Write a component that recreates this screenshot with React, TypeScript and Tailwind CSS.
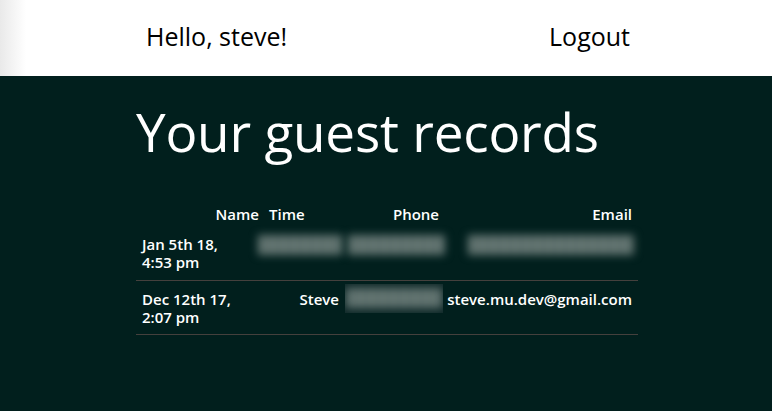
import React from "react";

const Blur = ({ w, className = "", clip = false }: { w: string; className?: string; clip?: boolean }) => {
  const inner = (
    <div
      className={
        "h-[20px] blur-[4px] bg-[repeating-linear-gradient(90deg,#5b6d6b_0px,#71837f_5px,#4e605e_8px,#63756f_11px)] " +
        w
      }
    />
  );
  return clip ? (
    <div className={"overflow-hidden h-[29px] flex items-center justify-center bg-[#24363a]/40 " + className}>{inner}</div>
  ) : (
    <div className={className}>{inner}</div>
  );
};

export default function App() {
  return (
    <div
      className="min-h-[411px] bg-[#011f1d]"
      style={{ fontFamily: '"Open Sans", "Noto Sans", sans-serif' }}
    >
      <header className="h-[76px] bg-[linear-gradient(to_right,#e9e9e9,#ffffff_26px)]">
        <div className="w-[500px] mx-auto h-full flex items-center justify-between pl-[10px] pr-[6px] text-[25px] text-black pb-[3px]">
          <span>Hello, steve!</span>
          <span>Logout</span>
        </div>
      </header>
      <main className="w-[500px] mx-auto">
        <h1 className="text-[53px] leading-[1.2] text-white pt-[24px] tracking-[-0.2px]">Your guest records</h1>
        <table className="mt-[41px] w-[502px] table-fixed border-collapse text-white text-[15px] font-semibold leading-[18px]">
          <thead>
            <tr>
              <th className="w-[129px] text-right px-[6px] pb-[6px] font-semibold">Name</th>
              <th className="w-[80px] text-left px-[4px] pb-[6px] font-semibold">Time</th>
              <th className="w-[101px] text-right px-[7px] pb-[6px] font-semibold">Phone</th>
              <th className="w-[192px] text-right px-[6px] pb-[6px] font-semibold">Email</th>
            </tr>
          </thead>
          <tbody>
            <tr className="border-b border-[#45403d]">
              <td className="align-top px-[6px] pt-[6px] pb-[9px]">Jan 5th 18,<br />4:53 pm</td>
              <td className="align-top pt-[6px]"><Blur w="w-[84px]" className="-ml-[7px]" /></td>
              <td className="align-top pt-[6px] pl-[3px]"><Blur w="w-[97px]" /></td>
              <td className="align-top pt-[6px] pl-[22px] pr-[3px]"><Blur w="w-[166px]" /></td>
            </tr>
            <tr className="border-b border-[#45403d]">
              <td className="align-top px-[6px] pt-[9px] pb-[8px]">Dec 12th 17,<br />2:07 pm</td>
              <td className="align-top px-[6px] pt-[9px] text-right">Steve</td>
              <td className="align-top pt-[3px] pr-[3px]"><Blur w="w-[96px]" clip /></td>
              <td className="align-top pl-0 pr-[6px] pt-[9px] text-right whitespace-nowrap">steve.mu.dev@gmail.com</td>
            </tr>
          </tbody>
        </table>
      </main>
    </div>
  );
}
